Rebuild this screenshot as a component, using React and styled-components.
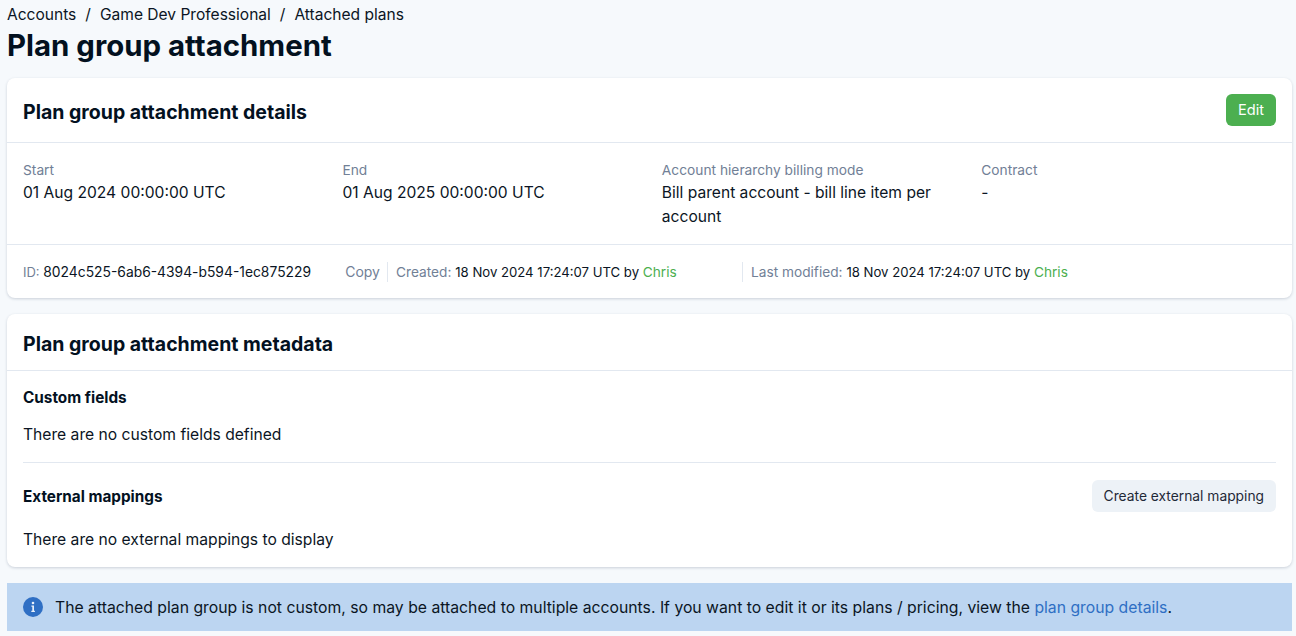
import React from "react";
import styled, { createGlobalStyle } from "styled-components";

const FONT = `Inter, "Noto Sans", "Liberation Sans", sans-serif`;

const GlobalStyle = createGlobalStyle`
  html, body {
    margin: 0;
    padding: 0;
    background: #f6f9fc;
  }
  body {
    font-family: ${FONT};
    color: #0b1524;
  }
`;

const Page = styled.div`
  height: 636px;
  overflow: hidden;
  box-sizing: border-box;
  padding: 4px 4px 0 7px;
  display: flex;
  flex-direction: column;
`;

const Breadcrumbs = styled.nav`
  display: flex;
  align-items: center;
  height: 20px;
  font-size: 15.55px;
  color: #0b1524;
  span + span {
    margin-left: 9px;
  }
`;

const PageTitle = styled.h1`
  margin: 4px 0 0;
  height: 36px;
  line-height: 36px;
  font-size: 29.4px;
  font-weight: 700;
  color: #03111f;
`;

const Card = styled.section`
  margin-top: ${(p) => p.$top || 16}px;
  background: #fff;
  border-radius: 8px;
  box-shadow: 0 1px 3px rgba(30, 50, 80, 0.2);
`;

const CardHeader = styled.header`
  display: flex;
  align-items: center;
  justify-content: space-between;
  height: ${(p) => p.$height}px;
  padding: 0 16px;
  border-bottom: 1px solid #e2e8f0;
`;

const CardTitle = styled.h2`
  margin: 0;
  padding-top: 3px;
  font-size: 19.5px;
  font-weight: 700;
  color: #03111f;
`;

const Button = styled.button`
  height: 32px;
  padding: 0 12px;
  border: 0;
  border-radius: 6px;
  font-family: ${FONT};
  font-size: ${(p) => (p.$primary ? 14.6 : 13.8)}px;
  background: ${(p) => (p.$primary ? "#4caf50" : "#edf2f7")};
  color: ${(p) => (p.$primary ? "#fff" : "#1f2937")};
`;

const FieldGrid = styled.div`
  display: grid;
  grid-template-columns: repeat(4, 1fr);
  column-gap: 24.7px;
  height: 102px;
  box-sizing: border-box;
  padding: 17px 16px 0;
  border-bottom: 1px solid #e2e8f0;
`;

const Label = styled.div`
  font-size: 13.75px;
  line-height: 20px;
  color: #718096;
`;

const Value = styled.div`
  margin-top: 1px;
  font-size: 15.6px;
  line-height: 24px;
  color: #0b1524;
`;

const MetaRow = styled.div`
  display: flex;
  align-items: center;
  height: 53px;
  padding: 0 16px;
  font-size: 13.15px;
  color: #0b1524;
`;

const MetaItem = styled.div`
  width: ${(p) => p.$width}px;
  flex: none;
  box-sizing: border-box;
  display: flex;
  align-items: center;
  height: 20px;
  white-space: pre;
  padding-left: ${(p) => (p.$divided ? 8 : 0)}px;
  border-left: ${(p) => (p.$divided ? "1px solid #e2e8f0" : "0")};
`;

const Muted = styled.span`
  font-size: ${(p) => p.$size || 13.7}px;
  color: #718096;
`;

const IdValue = styled.span`
  font-size: 13.85px;
`;

const CopyLink = styled.span`
  margin-left: auto;
  margin-right: 7px;
  font-size: 14px;
  color: #718096;
`;

const UserLink = styled.span`
  font-size: 13.7px;
  color: #4caf50;
`;

const SubHeading = styled.h3`
  margin: 0;
  font-size: 15.3px;
  font-weight: 700;
  color: #03111f;
`;

const Section = styled.div`
  margin: 0 16px;
  padding-top: ${(p) => p.$pt}px;
  height: ${(p) => p.$height}px;
  box-sizing: border-box;
  border-bottom: ${(p) => (p.$divider ? "1px solid #e2e8f0" : "0")};
`;

const SectionHead = styled.div`
  display: flex;
  align-items: center;
  justify-content: space-between;
  height: 32px;
`;

const BodyText = styled.p`
  margin: ${(p) => p.$top}px 0 0;
  font-size: 15.65px;
  line-height: 24px;
  color: #0b1524;
`;

const Banner = styled.div`
  margin-top: 16px;
  height: 48px;
  display: flex;
  align-items: center;
  gap: 12px;
  padding: 0 16px;
  background: #bcd5f1;
  font-size: 15.75px;
  color: #0b1524;
`;

const BannerLink = styled.span`
  color: #2f6fc4;
`;

function InfoIcon() {
  return (
    <svg width="20" height="20" viewBox="0 0 20 20" aria-hidden="true">
      <circle cx="10" cy="10" r="10" fill="#2f6fc4" />
      <circle cx="10" cy="6" r="1.3" fill="#e8f0fa" />
      <path d="M8.4 8.6h2.6v5.2h0.9v1.1H8.3v-1.1h1V9.7h-0.9z" fill="#e8f0fa" />
    </svg>
  );
}

export default function App() {
  return (
    <>
      <GlobalStyle />
      <Page>
        <Breadcrumbs>
          <span>Accounts</span>
          <span>/</span>
          <span>Game Dev Professional</span>
          <span>/</span>
          <span>Attached plans</span>
        </Breadcrumbs>
        <PageTitle>Plan group attachment</PageTitle>

        <Card $top={14}>
          <CardHeader $height={64}>
            <CardTitle>Plan group attachment details</CardTitle>
            <Button $primary>Edit</Button>
          </CardHeader>
          <FieldGrid>
            <div>
              <Label>Start</Label>
              <Value>01 Aug 2024 00:00:00 UTC</Value>
            </div>
            <div>
              <Label>End</Label>
              <Value>01 Aug 2025 00:00:00 UTC</Value>
            </div>
            <div>
              <Label>Account hierarchy billing mode</Label>
              <Value>Bill parent account - bill line item per account</Value>
            </div>
            <div>
              <Label>Contract</Label>
              <Value>-</Value>
            </div>
          </FieldGrid>
          <MetaRow>
            <MetaItem $width={364}>
              <Muted $size={13}>ID: </Muted>
              <IdValue>8024c525-6ab6-4394-b594-1ec875229</IdValue>
              <CopyLink>Copy</CopyLink>
            </MetaItem>
            <MetaItem $divided $width={355}>
              <Muted>Created: </Muted>18 Nov 2024 17:24:07 UTC by&nbsp;
              <UserLink>Chris</UserLink>
            </MetaItem>
            <MetaItem $divided $width={400}>
              <Muted>Last modified: </Muted>18 Nov 2024 17:24:07 UTC by&nbsp;
              <UserLink>Chris</UserLink>
            </MetaItem>
          </MetaRow>
        </Card>

        <Card>
          <CardHeader $height={56}>
            <CardTitle>Plan group attachment metadata</CardTitle>
          </CardHeader>
          <Section $divider $pt={10} $height={92}>
            <SectionHead>
              <SubHeading>Custom fields</SubHeading>
            </SectionHead>
            <BodyText $top={10}>There are no custom fields defined</BodyText>
          </Section>
          <Section $pt={17} $height={104}>
            <SectionHead>
              <SubHeading>External mappings</SubHeading>
              <Button>Create external mapping</Button>
            </SectionHead>
            <BodyText $top={16}>There are no external mappings to display</BodyText>
          </Section>
        </Card>

        <Banner>
          <InfoIcon />
          <span>
            The attached plan group is not custom, so may be attached to multiple accounts. If you
            want to edit it or its plans / pricing, view the <BannerLink>plan group details</BannerLink>.
          </span>
        </Banner>
      </Page>
    </>
  );
}
